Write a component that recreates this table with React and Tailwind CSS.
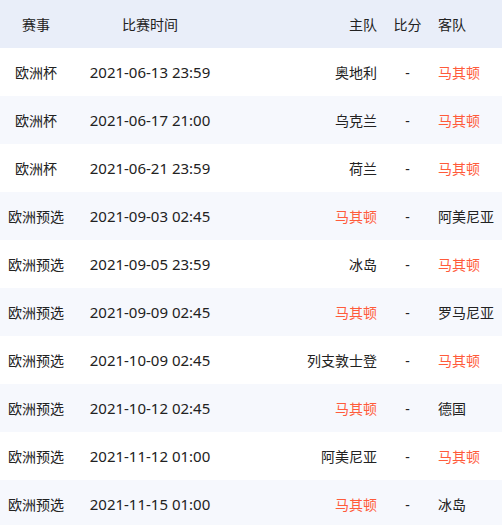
import React from "react";

const rows = [
  ["欧洲杯", "2021-06-13 23:59", "奥地利", "马其顿"],
  ["欧洲杯", "2021-06-17 21:00", "乌克兰", "马其顿"],
  ["欧洲杯", "2021-06-21 23:59", "荷兰", "马其顿"],
  ["欧洲预选", "2021-09-03 02:45", "马其顿", "阿美尼亚"],
  ["欧洲预选", "2021-09-05 23:59", "冰岛", "马其顿"],
  ["欧洲预选", "2021-09-09 02:45", "马其顿", "罗马尼亚"],
  ["欧洲预选", "2021-10-09 02:45", "列支敦士登", "马其顿"],
  ["欧洲预选", "2021-10-12 02:45", "马其顿", "德国"],
  ["欧洲预选", "2021-11-12 01:00", "阿美尼亚", "马其顿"],
  ["欧洲预选", "2021-11-15 01:00", "马其顿", "冰岛"],
];

const grid = "grid grid-cols-[72px_156px_157px_45px_73px] h-12 items-center";

function Team({ name }) {
  return <span className={name === "马其顿" ? "text-[#ff5b3b]" : "text-[#222]"}>{name}</span>;
}

export default function App() {
  return (
    <div
      className="w-[503px] h-[525px] overflow-hidden bg-white text-[14px] text-[#222]"
      style={{ fontFamily: '"Noto Sans", "Noto Sans CJK SC", sans-serif' }}
    >
      <div className={`${grid} bg-[#e9eef9] w-[502px]`}>
        <div className="text-center">赛事</div>
        <div className="text-center">比赛时间</div>
        <div className="text-right pr-2">主队</div>
        <div className="text-center">比分</div>
        <div className="pl-2">客队</div>
      </div>
      {rows.map((r, i) => (
        <div key={i} className={`${grid} w-[502px] ${i % 2 === 1 ? "bg-[#f6f8fd]" : "bg-white"}`}>
          <div className="text-center">{r[0]}</div>
          <div className="text-center text-[15px]">{r[1]}</div>
          <div className="text-right pr-2"><Team name={r[2]} /></div>
          <div className="text-center">-</div>
          <div className="pl-2"><Team name={r[3]} /></div>
        </div>
      ))}
    </div>
  );
}
